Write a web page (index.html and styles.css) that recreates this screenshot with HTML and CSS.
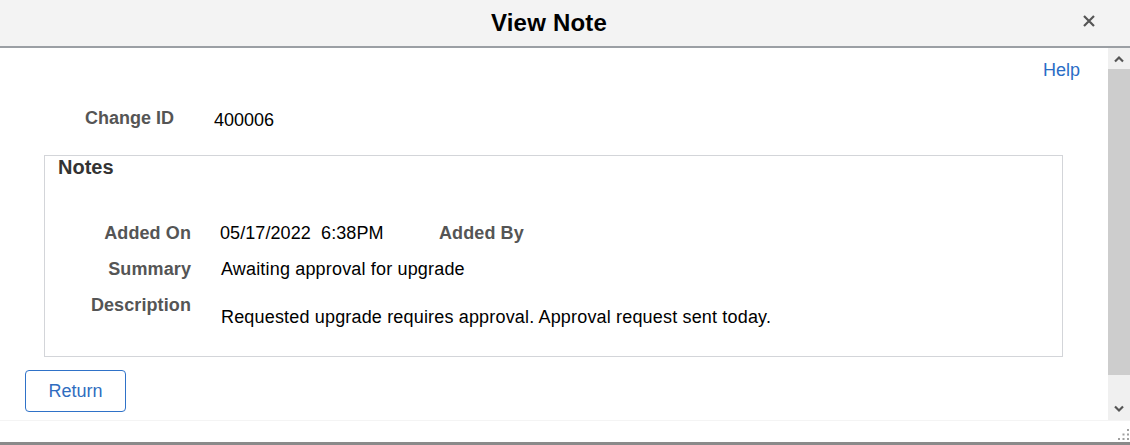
FILE: index.html
```html
<!DOCTYPE html>
<html lang="en">
<head>
<meta charset="utf-8">
<title>View Note</title>
<link rel="stylesheet" href="styles.css">
</head>
<body>
<div class="dialog">
  <div class="header">
    <h1 class="title">View Note</h1>
    <button class="close" aria-label="Close">
      <svg width="14" height="14" viewBox="0 0 14 14"><path d="M2 2 L12 12 M12 2 L2 12" stroke="#555" stroke-width="2.2" fill="none"/></svg>
    </button>
  </div>
  <div class="main">
    <div class="content">
      <div class="help-row"><a class="help" href="#">Help</a></div>
      <div class="id-row">
        <span class="id-label">Change ID</span>
        <span class="id-value">400006</span>
      </div>
      <div class="notes">
        <div class="notes-title">Notes</div>
        <div class="note-grid">
          <div class="label">Added On</div>
          <div class="value date">05/17/2022  6:38PM</div>
          <div class="label by">Added By</div>
          <div class="label">Summary</div>
          <div class="value wide">Awaiting approval for upgrade</div>
          <div class="label">Description</div>
          <div class="value wide desc">Requested upgrade requires approval. Approval request sent today.</div>
        </div>
      </div>
      <button class="return">Return</button>
    </div>
    <div class="scrollbar">
      <div class="sb-btn">
        <svg width="12" height="8" viewBox="0 0 12 8"><path d="M2 6.5 L6 2.5 L10 6.5" stroke="#555" stroke-width="2.2" fill="none"/></svg>
      </div>
      <div class="sb-thumb"></div>
      <div class="sb-track">
        <div class="sb-btn">
          <svg width="12" height="8" viewBox="0 0 12 8"><path d="M2 1.5 L6 5.5 L10 1.5" stroke="#555" stroke-width="2.2" fill="none"/></svg>
        </div>
      </div>
    </div>
  </div>
  <div class="footer">
    <svg class="grip" width="14" height="14" viewBox="0 0 14 14" fill="#a0a0a0">
      <rect x="11" y="1" width="2" height="2"/>
      <rect x="6.5" y="5.5" width="2" height="2"/><rect x="11" y="5.5" width="2" height="2"/>
      <rect x="2" y="10" width="2" height="2"/><rect x="6.5" y="10" width="2" height="2"/><rect x="11" y="10" width="2" height="2"/>
    </svg>
  </div>
</div>
</body>
</html>
```

FILE: styles.css
```css
* { box-sizing: border-box; }

html, body {
  margin: 0;
  padding: 0;
  background: #ffffff;
}

body {
  font-family: "Liberation Sans", Arial, sans-serif;
  font-size: 18px;
  line-height: 21px;
  color: #000;
}

.dialog {
  width: 1130px;
  height: 445px;
  display: flex;
  flex-direction: column;
  overflow: hidden;
}

.header {
  height: 48px;
  flex: none;
  background: #f3f3f3;
  border-bottom: 2px solid #9b9fa4;
  display: flex;
  align-items: center;
  justify-content: center;
  padding-right: 32px;
  position: relative;
}

.title {
  margin: 0;
  font-size: 24px;
  font-weight: bold;
  line-height: 28px;
  letter-spacing: 0.2px;
  color: #000;
}

.close {
  position: absolute;
  right: 34px;
  top: 14px;
  width: 14px;
  height: 14px;
  padding: 0;
  border: 0;
  background: none;
  display: flex;
}

.main {
  height: 372px;
  flex: none;
  display: flex;
}

.content {
  flex: 1;
  overflow: hidden;
}

.help-row {
  margin-top: 12px;
  padding-right: 28px;
  text-align: right;
}

.help {
  color: #2a6dc6;
  text-decoration: none;
}

.id-row {
  margin-top: 27px;
  display: flex;
}

.id-label {
  width: 174px;
  text-align: right;
  font-weight: bold;
  color: #555;
}

.id-value {
  margin-left: 40px;
  padding-top: 2px;
}

.notes {
  margin: 24px 0 0 44px;
  width: 1019px;
  height: 202px;
  border: 1px solid #d3d5d9;
}

.notes-title {
  padding: 0 0 0 13px;
  font-size: 20px;
  line-height: 23px;
  font-weight: bold;
  color: #333;
}

.note-grid {
  margin-top: 44px;
  display: grid;
  grid-template-columns: 146px 218px auto;
  column-gap: 30px;
  row-gap: 15px;
  justify-content: start;
}

.label {
  text-align: right;
  font-weight: bold;
  color: #555;
  letter-spacing: 0.1px;
}

.label.by {
  text-align: left;
  margin-left: -30px;
}

.value {
  letter-spacing: 0.17px;
}

.date {
  white-space: pre;
  margin-left: -1px;
  letter-spacing: 0.08px;
}

.wide {
  grid-column: 2 / span 2;
}

.desc {
  padding-top: 12px;
}

.return {
  display: block;
  margin: 13px 0 0 25px;
  width: 101px;
  height: 42px;
  border: 1px solid #2f72c8;
  border-radius: 4px;
  background: #fff;
  color: #2f6dc0;
  font-family: inherit;
  font-size: 18px;
  padding: 0;
}

.scrollbar {
  width: 22px;
  flex: none;
  display: flex;
  flex-direction: column;
  background: #f0f0f0;
}

.sb-btn {
  height: 21px;
  display: flex;
  align-items: center;
  justify-content: center;
}

.sb-thumb {
  height: 306px;
  background: #cdcdcd;
}

.sb-track {
  flex: 1;
  display: flex;
  flex-direction: column;
  justify-content: flex-end;
  padding-bottom: 1px;
}

.footer {
  height: 25px;
  flex: none;
  border-top: 1px solid #f4f4f4;
  border-bottom: 3px solid #8a8a8a;
  display: flex;
  justify-content: flex-end;
  align-items: flex-end;
}

.grip {
  display: block;
}
```
